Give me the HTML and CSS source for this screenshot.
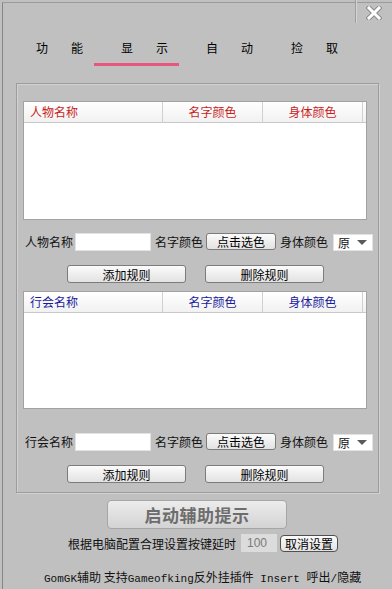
FILE: index.html
```html
<!DOCTYPE html>
<html lang="zh-CN">
<head>
    <meta charset="UTF-8">
    <meta name="viewport" content="width=device-width, initial-scale=1.0">
    <title>GomGK辅助</title>
    <link rel="stylesheet" href="styles.css">
</head>
<body>
    <div class="window">
        <div class="titlebar">
            <div class="close">
                <svg width="16" height="14" viewBox="0 0 16 14">
                    <path d="M3 2 L13 12 M13 2 L3 12" stroke="#8a8a8a" stroke-width="5" stroke-linecap="square"/>
                    <path d="M3 2 L13 12 M13 2 L3 12" stroke="#ffffff" stroke-width="3" stroke-linecap="square"/>
                </svg>
            </div>
        </div>

        <ul class="tabs">
            <li>功能</li>
            <li class="active">显示</li>
            <li>自动</li>
            <li>捡取</li>
        </ul>

        <section class="group">
            <div class="list">
                <div class="list-head red">
                    <span class="col col-name">人物名称</span>
                    <span class="col">名字颜色</span>
                    <span class="col">身体颜色</span>
                </div>
            </div>
            <div class="form-row">
                <span class="label">人物名称</span>
                <input class="text-in" type="text">
                <span class="label gap">名字颜色</span>
                <button class="btn pick">点击选色</button>
                <span class="label gap">身体颜色</span>
                <div class="select">原<span class="arrow"></span></div>
            </div>
            <div class="btn-row">
                <button class="btn rule">添加规则</button>
                <button class="btn rule">删除规则</button>
            </div>

            <div class="list list-two">
                <div class="list-head blue">
                    <span class="col col-name">行会名称</span>
                    <span class="col">名字颜色</span>
                    <span class="col">身体颜色</span>
                </div>
            </div>
            <div class="form-row row-three">
                <span class="label">行会名称</span>
                <input class="text-in" type="text">
                <span class="label gap">名字颜色</span>
                <button class="btn pick">点击选色</button>
                <span class="label gap">身体颜色</span>
                <div class="select">原<span class="arrow"></span></div>
            </div>
            <div class="btn-row">
                <button class="btn rule">添加规则</button>
                <button class="btn rule">删除规则</button>
            </div>
        </section>

        <button class="start">启动辅助提示</button>

        <div class="delay-row">
            <span>根据电脑配置合理设置按键延时</span>
            <div class="delay-in">100</div>
            <button class="btn cancel">取消设置</button>
        </div>

        <p class="footer"><span class="mono">GomGK</span>辅助 支持<span class="mono">Gameofking</span>反外挂插件<span class="mono"> Insert </span>呼出<span class="mono">/</span>隐藏</p>
    </div>
</body>
</html>
```
FILE: styles.css
```css
body {
    margin: 0;
    padding: 0;
    background-color: #c0c0c0;
    font-family: 'Noto Sans CJK SC', sans-serif;
    font-size: 12px;
    color: #111;
    width: 392px;
    height: 589px;
    overflow: hidden;
}
.window {
    margin: 2px 0 0 2px;
    border-top: 1px solid #9a9a9a;
    border-left: 1px solid #858585;
    height: 587px;
    box-sizing: border-box;
}
.titlebar {
    display: flex;
    justify-content: flex-end;
    height: 20px;
    margin-top: -3px;
    padding-top: 3px;
    box-sizing: content-box;
}
.close {
    width: 36px;
    border-left: 1px solid #9e9e9e;
    box-shadow: inset 1px 0 0 #d4d4d4;
    display: flex;
    justify-content: center;
    align-items: center;
    margin-top: -3px;
    padding-top: 3px;
}
.tabs {
    list-style: none;
    display: flex;
    margin: 17px 0 0 0;
    padding: 0 0 0 6px;
}
.tabs li {
    width: 85px;
    flex: none;
    padding-left: 27px;
    box-sizing: border-box;
    font-size: 12px;
    line-height: 16px;
    letter-spacing: 23px;
    white-space: nowrap;
    overflow: visible;
    padding-bottom: 7px;
    border-bottom: 3px solid transparent;
    color: #000;
}
.tabs li.active {
    border-bottom-color: #e8557f;
}
.group {
    margin: 17px 0 0 13px;
    width: 363px;
    box-sizing: border-box;
    border: 1px solid #9c9c9c;
    box-shadow: inset 1px 1px 0 #d2d2d2, 1px 1px 0 #d2d2d2;
    padding: 17px 11px 9px 6px;
}
.list {
    width: 344px;
    height: 119px;
    box-sizing: border-box;
    border: 1px solid #a2a2a2;
    background: #fff;
}
.list-two {
    height: 118px;
    margin-top: 8px;
}
.list-head {
    display: flex;
    height: 21px;
    box-sizing: border-box;
    background: linear-gradient(#ffffff, #f1f1f1);
    border-bottom: 1px solid #c9c9c9;
}
.list-head .col {
    width: 100px;
    text-align: center;
    line-height: 20px;
    border-right: 1px solid #d0d0d0;
    box-sizing: border-box;
}
.list-head .col-name {
    width: 139px;
    text-align: left;
    padding-left: 6px;
}
.red { color: #c81d1d; }
.blue { color: #1a1a9c; }
.form-row {
    display: flex;
    align-items: center;
    height: 18px;
    margin-top: 13px;
    padding-left: 2px;
}
.form-row > * {
    flex-shrink: 0;
}
.row-three {
    margin-top: 24px;
}
.label {
    white-space: nowrap;
    line-height: 18px;
}
.label.gap {
    margin-left: 4px;
}
.text-in {
    width: 76px;
    height: 18px;
    margin: 0 0 0 2px;
    box-sizing: border-box;
    border: 1px solid #e2e2e2;
    background: #fff;
    padding: 0;
}
.btn {
    font-family: 'Noto Sans CJK SC', sans-serif;
    font-size: 12px;
    color: #000;
    background: linear-gradient(#fbfbfb, #e2e2e2);
    border: 1px solid #7c7c7c;
    border-radius: 3px;
    padding: 0;
    box-sizing: border-box;
    line-height: 15px;
}
.pick {
    width: 70px;
    height: 17px;
    margin-left: 3px;
    margin-top: -1px;
}
.select {
    width: 40px;
    height: 17px;
    margin-left: 5px;
    box-sizing: border-box;
    background: #fff;
    border: 1px solid #e2e2e2;
    display: flex;
    align-items: center;
    justify-content: space-between;
    padding: 0 5px 0 4px;
    line-height: 17px;
}
.arrow {
    width: 0;
    height: 0;
    border-left: 5px solid transparent;
    border-right: 5px solid transparent;
    border-top: 5px solid #5a5a5a;
}
.btn-row {
    display: flex;
    gap: 19px;
    margin-top: 14px;
    padding-left: 44px;
}
.rule {
    width: 119px;
    height: 18px;
}
.start {
    display: block;
    margin: 7px 0 0 104px;
    width: 180px;
    height: 29px;
    box-sizing: border-box;
    background: linear-gradient(#ececec, #d3d3d3);
    border: 1px solid #a6a6a6;
    border-radius: 4px;
    font-family: 'Noto Sans CJK SC', sans-serif;
    font-size: 17px;
    font-weight: bold;
    color: #6d6d6d;
    letter-spacing: 0.5px;
    padding: 0;
}
.delay-row {
    display: flex;
    align-items: center;
    height: 18px;
    margin-top: 5px;
    padding-left: 65px;
}
.delay-in {
    width: 36px;
    height: 18px;
    margin-left: 5px;
    background: #dcdcdc;
    color: #7a7a7a;
    font-family: 'Liberation Sans', sans-serif;
    font-size: 12px;
    line-height: 18px;
    padding-left: 6px;
    box-sizing: border-box;
}
.cancel {
    width: 58px;
    height: 17px;
    margin-left: 3px;
    border-color: #505050;
    border-radius: 4px;
}
.footer {
    margin: 17px 0 0 41px;
    line-height: 16px;
    white-space: nowrap;
}
.mono {
    font-family: 'Liberation Mono', monospace;
    font-size: 11px;
}
```
